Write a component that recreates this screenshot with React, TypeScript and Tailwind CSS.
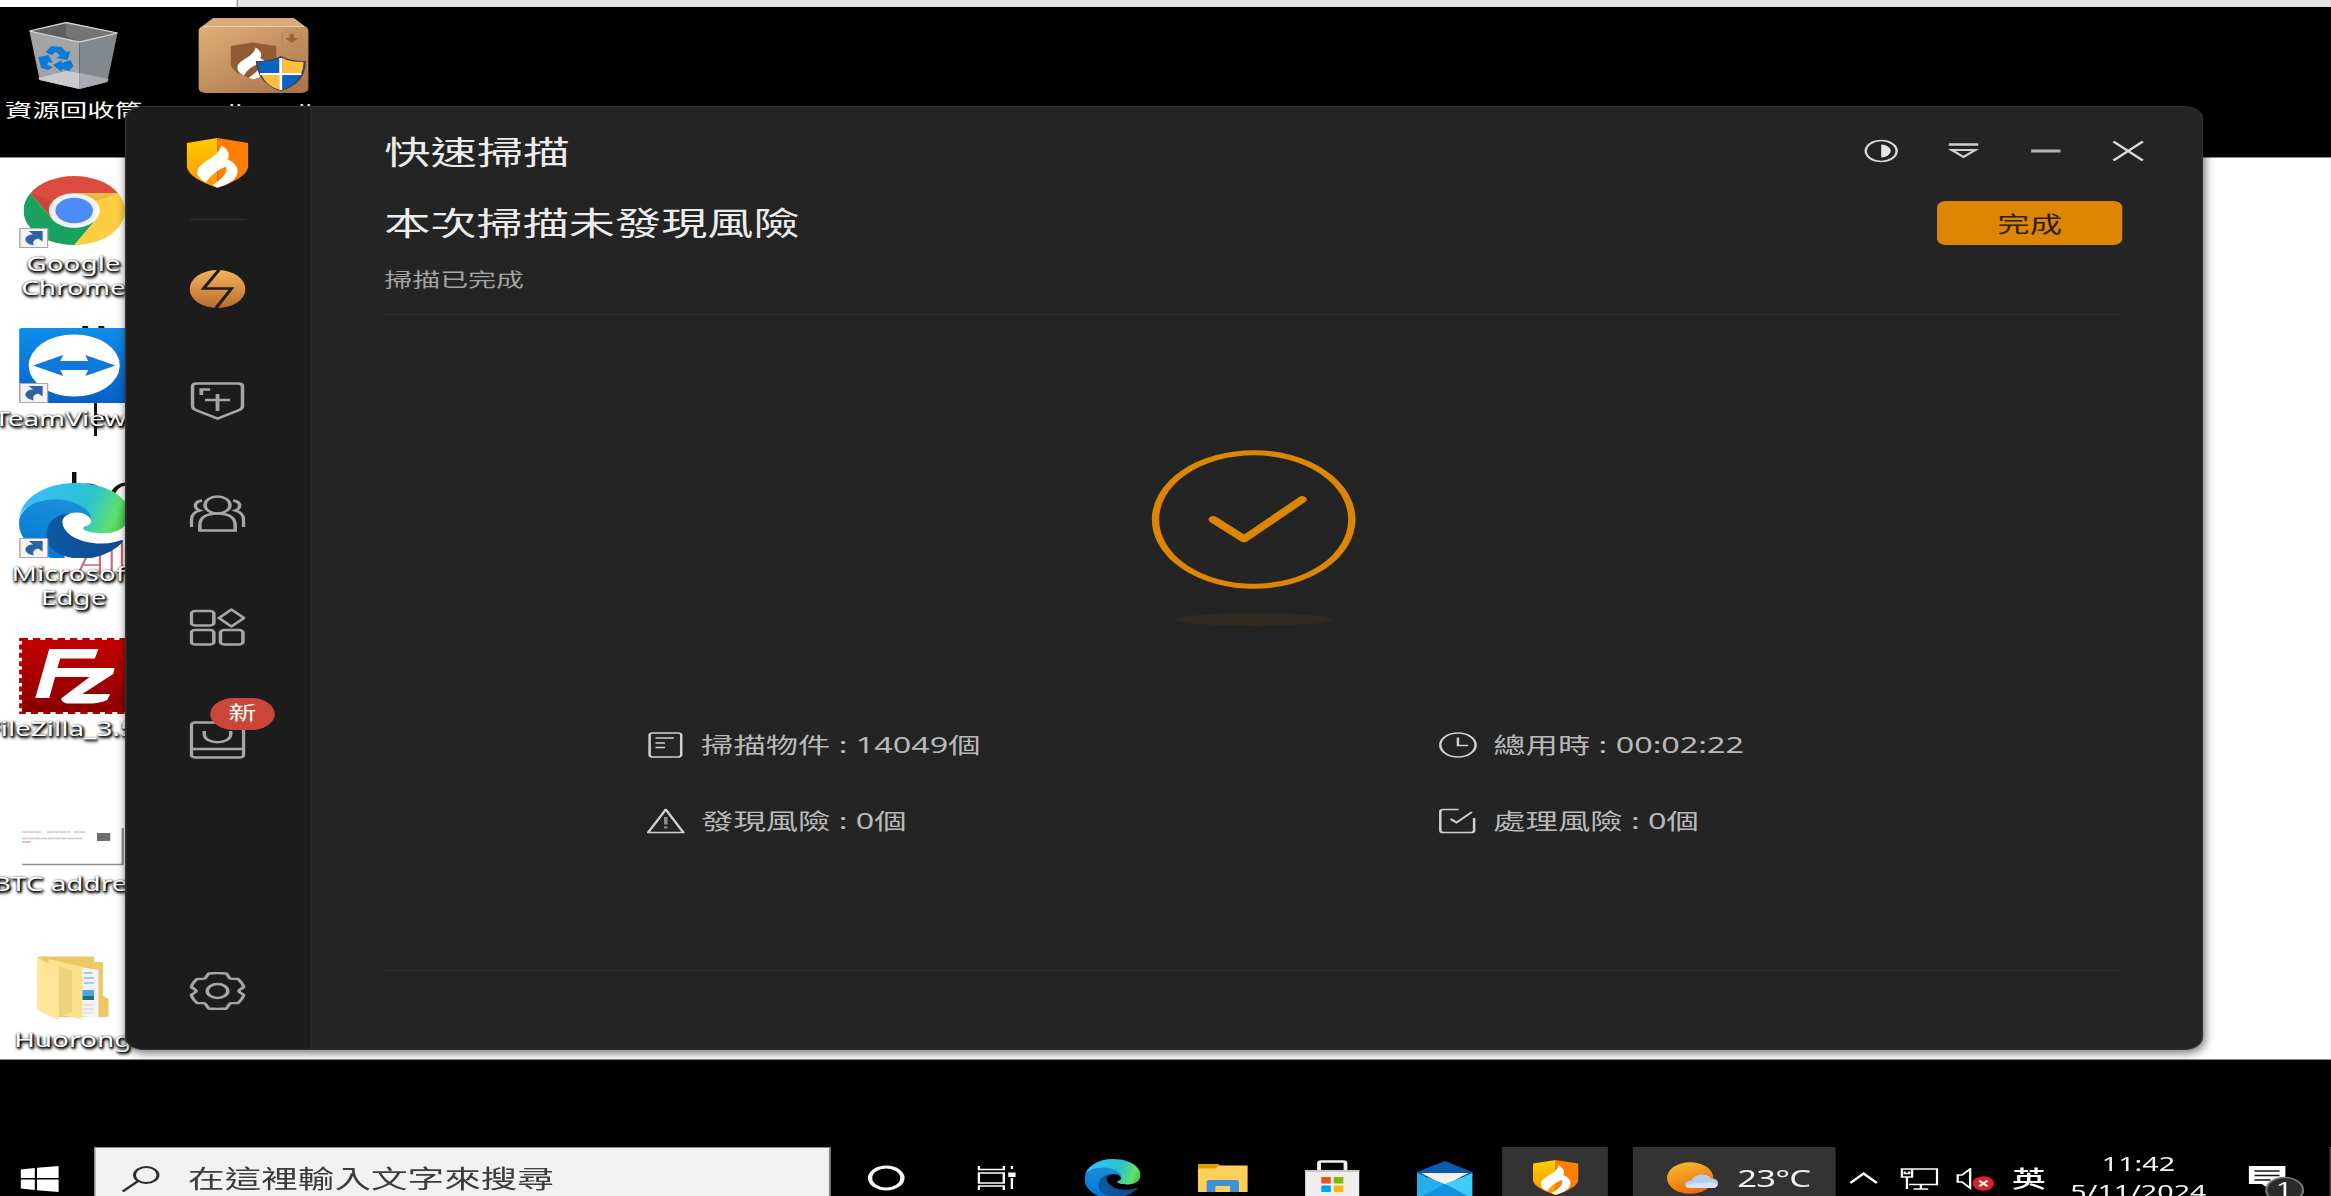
import React from 'react';

type Box = { className?: string };

const Flame = () => (
  <path
    fill="#fff"
    d="M24.300 7.500 C29 12 30.500 17 28.500 22 C33 24.500 35.500 29 35.500 34 C35.500 42 29 48 21.500 50.500 L18 48 C24 42 28.500 37 27.500 29 C24 31 17 36 13.500 45.500 C9 42 7 38 7.500 34 C8.500 24 22 21 24.300 7.500 Z"
  />
);

const Shield = ({ className }: Box) => (
  <svg viewBox="0 0 43 51" preserveAspectRatio="none" className={className}>
    <defs>
      <linearGradient id="sl" x1="0" y1="0" x2="0" y2="1">
        <stop offset="0" stopColor="#ffcc00" />
        <stop offset="1" stopColor="#ff9500" />
      </linearGradient>
    </defs>
    <path fill="url(#sl)" d="M21.500 0 L0 5 V29 C1 38 10 45 21.500 51 Z" />
    <path fill="#ff7d00" d="M21.500 0 L43 5 V29 C42 38 33 45 21.500 51 Z" />
    <Flame />
  </svg>
);

const Edge = ({ className }: Box) => (
  <svg viewBox="0 0 256 256" className={className}>
    <defs>
      <linearGradient id="e1" x1="0" y1="0" x2="1" y2="0">
        <stop offset="0" stopColor="#0c59a4" />
        <stop offset="1" stopColor="#114a8b" />
      </linearGradient>
      <linearGradient id="e2" x1="0.6" y1="0" x2="0.3" y2="1">
        <stop offset="0" stopColor="#1b90d8" />
        <stop offset="1" stopColor="#0078d8" />
      </linearGradient>
      <linearGradient id="e3" x1="0" y1="0.4" x2="1" y2="0.6">
        <stop offset="0" stopColor="#38bdff" />
        <stop offset="0.6" stopColor="#2bc3d0" />
        <stop offset="0.88" stopColor="#5fe070" />
        <stop offset="1" stopColor="#4cc845" />
      </linearGradient>
    </defs>
    <path fill="url(#e2)" d="M105.700 241.400a79.200 79.200 0 0 1-22.700-21.300a80.700 80.700 0 0 1 34.100-115.100c3.400-1.600 9-4.400 16.500-4.300c10.900.1 21 5.200 27.500 13.900c4.300 5.700 6.800 12.700 6.900 19.900c0-.2 25.400-83.300-84.600-83.300c-46.200 0-84.100 43.900-84.100 82.400c-.2 20.300 4.200 40.500 12.800 59c28.800 61.300 97.500 91.300 161.800 70.600c-22.900 7.200-47.800 4.300-68.200-8.100z" />
    <path fill="url(#e1)" d="M235.700 195.500a93.700 93.700 0 0 1-10.600 4.700a101.900 101.900 0 0 1-35.900 6.400c-47.300 0-88.500-32.500-88.500-74.300c.1-11.400 6.400-21.900 16.400-27.300c-42.800 1.800-53.800 46.400-53.800 72.500c0 73.900 68.100 81.400 82.800 81.400c7.900 0 19.800-2.300 27-4.600l1.300-.4a128.300 128.300 0 0 0 66.600-52.800a4 4 0 0 0-5.300-5.600z" />
    <path fill="url(#e3)" d="M152.300 148.900c-.9 1.100-3.500 2.600-3.500 5.900c0 2.700 1.800 5.300 4.900 7.500c14.900 10.400 43.100 9 43.200 9a61.800 61.800 0 0 0 31.400-8.700a63.800 63.800 0 0 0 28-54.900c.3-22.600-8-37.600-11.400-44.200C223.800 21.600 179.500 0 128.100 0A127.800 127.800 0 0 0 0 126.200c.5-38.500 38.700-69.500 84.100-69.500c3.700 0 24.600.4 44 10.600c17.100 9 26.100 19.800 32.300 30.600c6.500 11.200 7.600 25.300 7.600 30.900s-2.800 14-15.700 20.100z" />
  </svg>
);

const Chrome = ({ className }: Box) => {
  const arc = 'M6.700 25 A50 50 0 0 1 93.300 25 H50 A25 25 0 0 0 28.350 62.500 Z';
  return (
    <svg viewBox="0 0 100 100" className={className}>
      <path fill="#dd4b3e" d={arc} />
      <path fill="#ffcd42" d={arc} transform="rotate(120 50 50)" />
      <path fill="#18a15f" d={arc} transform="rotate(240 50 50)" />
      <path fill="#3e2723" opacity="0.12" d="M6.700 25 L28.350 62.500 L30 38 Z M50 25 H93.300 L72 36 Z" />
      <circle cx="50" cy="50" r="22.500" fill="#f1f1f1" />
      <circle cx="50" cy="50" r="18.500" fill="#4c8bf5" />
    </svg>
  );
};

const Recycle = ({ className }: Box) => (
  <svg viewBox="0 0 60 67" preserveAspectRatio="none" className={className}>
    <path fill="#5f5f5f" d="M0 9 L25 0 L60 11 L34 20 Z" />
    <path fill="#757575" d="M25 0 L60 11 L34 20 L25 14 Z" />
    <path fill="#a2a4a6" d="M0 9 L34 20 V67 L7 58 Z" />
    <path fill="#83888c" d="M34 20 L60 11 L53 60 L34 67 Z" />
    <path fill="#c9cbce" d="M6 56 L25 49 L34 51 V67 L7 58 Z" />
    <path fill="#a9adb1" d="M34 51 L54 57 L53 60 L34 67 Z" />
    <path fill="none" stroke="#d6d6d6" strokeWidth="1.300" d="M0 9 L25 0.600 L60 11 L34 20 Z" />
    <g fill="#0a7bd6">
      <path d="M11 30 L15 24 L22 25 L25 30 L28 29 L26 38 L18 36 L21 34 L18 30 L15 33 Z" />
      <path d="M6 35 L13 33 L16 41 L13 40 L12 43 L16 45 L13 48 L8 46 Z" />
      <path d="M16 43 L22 38 V41 L28 38 L30 44 L27 49 L22 47 V50 Z" />
    </g>
  </svg>
);

const Installer = ({ className }: Box) => (
  <svg viewBox="0 0 75 75" className={className}>
    <defs>
      <linearGradient id="bx" x1="0" y1="0" x2="0.8" y2="1">
        <stop offset="0" stopColor="#e0b078" />
        <stop offset="1" stopColor="#aa774d" />
      </linearGradient>
    </defs>
    <path fill="#d9ab78" d="M10 0 H65 L74 10 H1 Z" />
    <rect y="8" width="75" height="67" rx="5" fill="url(#bx)" />
    <path stroke="#eed0a8" strokeWidth="1" d="M3 8.500 H72" />
    <rect x="57" y="14" width="13" height="13" rx="1" fill="none" stroke="#b98a5c" />
    <path fill="#9c6238" d="M62 16 H65 V20 H68 L63.500 25 L59 20 H62 Z" />
    <path fill="#925c33" d="M22 28 L37 24.500 L53 28 V46 C52 53 46 57 37 61 C28 57 23 53 22 46 Z" />
    <g transform="translate(21 24) scale(.74)"><Flame /></g>
    <path fill="#39444d" d="M39 43 C46 43 52 41 56 38 C60 41 66 43 73 43 C73 58 68 68 56 73 C45 68 40 58 39 43 Z" />
    <path fill="#0a64c0" d="M40.500 44 C47 44 52 42 55 40 V55 H42 C41 51 40.500 48 40.500 44 Z M57 57 H69 C67 64 63 69 57 71.500 Z" />
    <path fill="#ffbe3c" d="M57 40 C61 43 66 44 71.500 44 C71.500 48 71 52 70 55 H57 Z M43 57 H55 V71.500 C49 69 45 64 43 57 Z" />
    <path stroke="#fff" strokeWidth="2" d="M56 40 V72 M42 56 H70" />
  </svg>
);

const TeamViewer = ({ className }: Box) => (
  <svg viewBox="0 0 75 75" className={className}>
    <defs>
      <linearGradient id="tv" x1="0" y1="0" x2="0" y2="1">
        <stop offset="0" stopColor="#0f8eec" />
        <stop offset="1" stopColor="#0860c8" />
      </linearGradient>
    </defs>
    <rect width="75" height="75" rx="2" fill="url(#tv)" />
    <circle cx="37.500" cy="37.500" r="31" fill="#fff" />
    <path fill="#0f78dc" d="M9.500 37.500 L30 27 L28 33 H47 L45 27 L65.500 37.500 L45 48 L47 42 H28 L30 48 Z" />
  </svg>
);

const FileZilla = ({ className }: Box) => (
  <svg viewBox="0 0 75 76" className={className}>
    <defs>
      <linearGradient id="fz" x1="0" y1="0" x2="0" y2="1">
        <stop offset="0" stopColor="#c40000" />
        <stop offset="1" stopColor="#8a0000" />
      </linearGradient>
    </defs>
    <rect x="2" y="2" width="73" height="72" fill="url(#fz)" />
    <rect x="1" y="1" width="74" height="74" fill="none" stroke="#b00000" strokeWidth="2.500" strokeDasharray="5 3.400" />
    <path fill="#fff" d="M20.500 11 H54 L51.500 20.500 H28 L26 30 H65 L64 36 L43 56 H62 L60 62 C55 65 50 66 44 65.500 H33 C30 65 28 62 29 60 L48 39 H24.500 L20.500 60 H11 Z" />
  </svg>
);

const Folder = ({ className }: Box) => (
  <svg viewBox="0 0 49 64" preserveAspectRatio="none" className={className}>
    <path fill="#ecc765" d="M1 0.500 H39 V6 H45 V40 L49 43 V61 H14 L1 20 Z" />
    <path fill="#f3f3f3" d="M29 11 L42 14 V62 L29 60 Z" />
    <path stroke="#9ccbf0" strokeWidth="2" d="M32 17 H38 M32 22 H39 M32 27 H39" />
    <path fill="#4aa5ea" d="M31 34 H39 V40 H31 Z" />
    <path fill="#216f7a" d="M31 40 H39 V44 H31 Z" />
    <path stroke="#d3d3d3" strokeWidth="1" d="M31 49 H39 M31 53 H39 M31 57 H38" />
    <path fill="#fbe08d" d="M8 3 L31 11 V63 L8 57 Z" />
    <path fill="#ecd37c" d="M15 10 L24 15 V56 L15 60 Z" />
    <path fill="#fee59a" d="M0 1 L15 13 V64 L0 54 Z" />
  </svg>
);

const Shortcut = () => (
  <svg viewBox="0 0 20 20" className="absolute left-[13px] bottom-0 h-5 w-5">
    <rect x="0.500" y="0.500" width="19" height="19" fill="#f4f4f4" stroke="#a9a9a9" />
    <path fill="#2f62a5" d="M6.500 3 H16 V13.500 L13 10.500 C10 11.500 9 14 10 17.500 C5 16 3 12 5 9 C6 7 8 6.500 9.500 6.500 Z" />
  </svg>
);

const label =
  'whitespace-nowrap text-center text-[19px] leading-[23.500px] text-white [text-shadow:1px_1px_2px_#000,0_1px_2px_#000,1px_2px_3px_#000]';

const line = {
  fill: 'none',
  stroke: '#a6a6a6',
  strokeWidth: 2.4,
} as const;

const navIcons: React.ReactNode[] = [
  <svg key="shield" viewBox="0 0 38 38" className="h-[38px] w-[38px]" {...line}>
    <path d="M5 1.500 H33 Q36 1.500 36 4.500 V24 Q36 27 33 28.500 L19 36.500 L5 28.500 Q2 27 2 24 V4.500 Q2 1.500 5 1.500 Z" />
    <path d="M8 13 V7.500 H14 M19 12 V29 M10.500 18 H27.500" strokeWidth="2.600" />
  </svg>,
  <svg key="people" viewBox="0 0 38 38" className="h-[38px] w-[38px]" {...line}>
    <circle cx="19" cy="10" r="8.500" />
    <path d="M7 35.500 V30 C7 22 12 18.500 19 18.500 S31 22 31 30 V35.500 Z M8.500 5.500 C3 6.500 2.500 13 7 15.500 C3 17 1.200 20 1.200 25 V32 M29.500 5.500 C35 6.500 35.500 13 31 15.500 C35 17 36.800 20 36.800 25 V32" />
  </svg>,
  <svg key="grid" viewBox="0 0 38 38" className="h-[38px] w-[38px]" {...line}>
    <rect x="1.200" y="3" width="15.300" height="14.500" rx="2.500" />
    <rect x="1.200" y="22" width="15.300" height="14.500" rx="2.500" />
    <rect x="21" y="22" width="15.300" height="14.500" rx="2.500" />
    <path d="M28.500 1.500 L37 10 L28.500 18.500 L20 10 Z" strokeLinejoin="round" />
  </svg>,
];

const Inbox = () => (
  <svg viewBox="0 0 38 38" className="h-[38px] w-[38px]" {...line}>
    <rect x="1.200" y="1.500" width="35.600" height="35" rx="2.500" />
    <path d="M1 28 H37 M10 10 V13 C10 24 28 24 28 13 V10" />
  </svg>
);

const Gear = () => (
  <svg viewBox="0 0 38 38" className="h-[38px] w-[38px]" {...line}>
    <circle cx="19" cy="19" r="7" />
    <path
      strokeLinejoin="round"
      d="M13 1.500 Q19 0.500 25 1.500 L27.500 6.500 Q28 7 33 7 Q36 11 37 15 Q33.500 18 33.500 19 Q33.500 20 37 23 Q36 27 33 31 Q28 31 27.500 31.500 L25 36.500 Q19 37.500 13 36.500 L10.500 31.500 Q10 31 5 31 Q2 27 1 23 Q4.500 20 4.500 19 Q4.500 18 1 15 Q2 11 5 7 Q10 7 10.500 6.500 Z"
    />
  </svg>
);

const stats = [
  {
    text: '掃描物件 : 14049個',
    icon: (
      <>
        <rect x="2" y="1" width="21.500" height="24" rx="2" />
        <path d="M6 6 H18.500 M6 11 H12.500 M6 15.500 H12.500" />
      </>
    ),
  },
  {
    text: '總用時 : 00:02:22',
    icon: (
      <>
        <circle cx="13" cy="13" r="12" />
        <path d="M13 5.500 V13.500 H20" />
      </>
    ),
  },
  {
    text: '發現風險 : 0個',
    icon: (
      <>
        <path d="M13 1.500 L25 24.500 H1 Z" strokeLinejoin="round" />
        <path d="M13 9 V16.500 M13 18.500 V20.500" stroke="#8c8c8c" strokeWidth="2.400" />
      </>
    ),
  },
  {
    text: '處理風險 : 0個',
    icon: (
      <>
        <path d="M13.500 1.500 H3 Q1 1.500 1 3.500 V22.500 Q1 24.500 3 24.500 H22 Q24 24.500 24 22.500 V10" />
        <path d="M8 11 L12 14.500 L22.500 4" />
      </>
    ),
  },
];

const DesktopIcons = () => (
  <div className="absolute left-0 top-0 h-full w-[100px]">
    <div className="absolute top-[22px] flex w-[100px] flex-col items-center">
      <Recycle className="h-[67px] w-[60px]" />
      <span className="mt-[9px] whitespace-nowrap text-[18.700px] leading-[24px] text-white">資源回收筒</span>
    </div>
    <div className="absolute left-[122px] top-[18px] flex w-[100px] flex-col items-center">
      <Installer className="h-[75px] w-[75px]" />
      <span className="mt-[6px] -ml-[10px] text-[18.500px] leading-[24px] text-white">sysdiag-all</span>
    </div>
    <div className="absolute top-[173px] w-[100px]">
      <div className="relative flex h-[75px] justify-center">
        <Chrome className="mt-[3px] h-[69px] w-[69px]" />
        <Shortcut />
      </div>
      <p className={label + ' mt-[5px]'}>Google<br />Chrome</p>
    </div>
    <div className="absolute top-[328px] w-[100px]">
      <div className="relative flex h-[75px] justify-center">
        <TeamViewer className="h-[75px] w-[75px]" />
        <Shortcut />
      </div>
      <p className={label + ' mt-[5px] -ml-[4px] w-[108px]'}>TeamViewer</p>
    </div>
    <div className="absolute top-[483px] w-[100px]">
      <div className="relative flex h-[75px] justify-center">
        <Edge className="h-[75px] w-[75px]" />
        <Shortcut />
      </div>
      <p className={label + ' mt-[5px]'}>Microsoft<br />Edge</p>
    </div>
    <div className="absolute top-[638px] w-[100px]">
      <div className="flex h-[76px] justify-center">
        <FileZilla className="h-[76px] w-[75px]" />
      </div>
      <p className={label + ' mt-[4px] -ml-[10px] w-[114px]'}>FileZilla_3.59</p>
    </div>
    <div className="absolute top-[826px] w-[100px]">
      <svg viewBox="0 0 72 40" className="ml-[14px] h-10 w-[72px]">
        <rect x="0" y="0" width="70.500" height="38.500" fill="#fff" />
        <path d="M1 38.500 H69.500 V2" fill="none" stroke="#8e8e8e" strokeWidth="1.500" />
        <path d="M1 6 H14 M18 6 H34 M36 6 H44 M1 12.500 H42" stroke="#c8c8c8" strokeWidth="1.500" strokeDasharray="4 .4" />
        <path d="M1 16 H7" stroke="#f4a0a0" strokeWidth="1.500" />
        <rect x="52" y="7" width="9" height="8" fill="#6e6e6e" />
      </svg>
      <p className={label + ' mt-[7px] -ml-[5px] w-[108px]'}>BTC address</p>
    </div>
    <div className="absolute top-[956px] w-[100px]">
      <Folder className="ml-[25px] h-[64px] w-[49px]" />
      <p className={label + ' mt-[9px] -ml-[1px]'}>Huorong</p>
    </div>
  </div>
);

const AppWindow = () => (
  <div className="absolute left-[84.500px] top-[105.500px] flex h-[944.500px] w-[1414.500px] overflow-hidden rounded-[13px] border border-[#343434] bg-[#242424] shadow-[1px_3px_8px_rgba(0,0,0,0.55)]">
    <aside className="flex w-[126px] shrink-0 flex-col items-center border-r border-[#2e2e2e] bg-[#1c1c1c] pt-[31px] pb-[39px]">
      <Shield className="h-[50px] w-[42px]" />
      <div className="mt-[31px] h-px w-[38px] bg-[#333]" />
      <svg viewBox="0 0 38 38" className="mt-[50px] h-[38px] w-[38px] shrink-0">
        <defs>
          <linearGradient id="bolt" x1="0" y1="0" x2="0" y2="1">
            <stop offset="0" stopColor="#f3b45c" />
            <stop offset="1" stopColor="#b96c2e" />
          </linearGradient>
        </defs>
        <circle cx="19" cy="19" r="19" fill="url(#bolt)" />
        <path d="M20 0 L9.500 18.500 H28.500 L18 38" fill="none" stroke="#1c1c1c" strokeWidth="2.400" />
      </svg>
      <div className="mt-[74px] flex flex-col gap-[75px]">
        {navIcons}
        <div className="relative">
          <Inbox />
          <span className="absolute -top-[23px] left-[14px] flex h-8 w-[44px] items-center justify-center rounded-full bg-[#cb4638] pb-px text-[19px] text-white">新</span>
        </div>
      </div>
      <div className="mt-auto">
        <Gear />
      </div>
    </aside>
    <main className="flex flex-1 flex-col pl-[50px] pr-[54px]">
      <header className="-mr-[17px] flex h-[93px] items-center justify-between">
        <h1 className="-mt-[2px] text-[31.500px] leading-none text-[#ececec]">快速掃描</h1>
        <div className="-mt-[3px] flex gap-[30px]">
          <svg viewBox="0 0 26 26" className="h-[26px] w-[26px]">
            <circle cx="13" cy="12" r="10.500" fill="none" stroke="#d8d8d8" strokeWidth="1.700" />
            <path d="M13 5.500 A6.500 6.500 0 0 1 13 18.500 Z" fill="#e6e6e6" />
          </svg>
          <svg viewBox="0 0 26 26" className="h-[26px] w-[26px]" fill="none" stroke="#d0d0d0">
            <path d="M3 5.500 H23" strokeWidth="2.400" />
            <path d="M5 11 H21 L13 18 Z" strokeWidth="2" />
          </svg>
          <svg viewBox="0 0 26 26" className="h-[26px] w-[26px]">
            <path d="M3 12 H23" stroke="#b4b4b4" strokeWidth="3" />
          </svg>
          <svg viewBox="0 0 26 26" className="h-[26px] w-[26px]">
            <path d="M3 2.500 L23 21.500 M23 2.500 L3 21.500" stroke="#dcdcdc" strokeWidth="2" />
          </svg>
        </div>
      </header>
      <div className="flex h-[46px] items-center justify-between">
        <h2 className="text-[31.400px] leading-none text-[#ececec]">本次掃描未發現風險</h2>
        <button className="h-[44px] w-[126px] rounded-[6px] bg-[#dd8604] pt-px text-[22px] leading-none text-[#2b1d08]">完成</button>
      </div>
      <div className="flex h-[69.500px] items-center border-b border-[#323232] text-[19px] text-[#a3a3a3]">掃描已完成</div>
      <svg viewBox="0 0 140 180" className="mx-auto mt-[132.500px] h-[180px] w-[140px] shrink-0" fill="none" stroke="#dd8604">
        <circle cx="70" cy="71.500" r="66.800" strokeWidth="5" />
        <path d="M42.500 71.500 L63.500 91 L103 51.500" strokeWidth="6.500" strokeLinecap="round" strokeLinejoin="round" />
        <ellipse cx="70" cy="171.500" rx="53" ry="6.500" fill="#33291f" stroke="none" />
      </svg>
      <div className="ml-[178.500px] mt-[79px] grid grid-cols-[539px_1fr] text-[22px] text-[#b9b9b9]">
        {stats.map((s) => (
          <div key={s.text} className="flex h-[76px] items-center gap-[11px]">
            <svg viewBox="0 0 26 26" className="h-[26px] w-[26px]" fill="none" stroke="#d0d0d0" strokeWidth="1.700">
              {s.icon}
            </svg>
            <span>{s.text}</span>
          </div>
        ))}
      </div>
      <div className="mt-[111px] h-px bg-[#323232]" />
    </main>
  </div>
);

const Taskbar = () => (
  <footer className="absolute left-0 top-[1147px] flex h-[62px] w-full items-center text-white">
    <svg viewBox="0 0 26 26" className="ml-[14px] mt-[2px] h-[26px] w-[26px]" fill="#fff">
      <path d="M0 3.500 L9.700 2 V12 H0 Z M11.200 1.700 L26 0 V12 H11.200 Z M0 13.500 H9.700 V24 L0 22.500 Z M11.200 13.500 H26 V26 L11.200 24.200 Z" />
    </svg>
    <div className="ml-[24px] flex h-full w-[501px] items-center border border-[#8a8a8a] bg-[#f1f1f1]">
      <svg viewBox="0 0 26 26" className="ml-[18px] mt-[2px] h-[26px] w-[26px]" fill="none" stroke="#2d2d2d" strokeWidth="2">
        <circle cx="16.500" cy="9" r="8" />
        <path d="M11 15 L0.500 25.500" />
      </svg>
      <span className="ml-[19px] text-[24.900px] leading-none text-[#3c3c3c]">在這裡輸入文字來搜尋</span>
    </div>
    <svg viewBox="0 0 26 26" className="ml-[25px] h-[26px] w-[26px]">
      <circle cx="13" cy="13" r="11" fill="none" stroke="#f5f5f5" strokeWidth="3" />
    </svg>
    <svg viewBox="0 0 27 26" className="ml-[48.500px] h-[26px] w-[27px]" fill="none" stroke="#fff" strokeWidth="1.600">
      <path d="M1 1 V4.500 H18 V1 M1 8 H18 V18 H1 Z M1 25 V21 H18 V25 M23.500 1 V4 M23.500 13 V24" />
      <path d="M21 7.500 H26 V12 H21 Z" fill="#fff" stroke="none" />
    </svg>
    <Edge className="ml-[46px] h-[38px] w-[38px]" />
    <svg viewBox="0 0 34 28" className="ml-[39px] h-[28px] w-[34px]">
      <path fill="#e19d00" d="M0 0 H14 L15.500 2 V6 H0 Z" />
      <path fill="#ffd15c" d="M0 4.500 H12 L14.500 1.500 H34 V28 H0 Z" />
      <path fill="#3c91d8" d="M6 18 Q6 16 8 16 H26 Q28 16 28 18 V28 H22 V22 H12 V28 H6 Z" />
    </svg>
    <svg viewBox="0 0 37 42" className="ml-[39.500px] mt-[5px] h-[42px] w-[37px]">
      <path d="M9.500 12 V3 Q9.500 1.500 11 1.500 H26 Q27.500 1.500 27.500 3 V12" fill="none" stroke="#f2f2f2" strokeWidth="2.600" />
      <path fill="#eee" d="M0 10 H37 V42 H0 Z" />
      <path fill="#c9c9c9" d="M0 10 H37 V12 H0 Z" />
      <path fill="#f25022" d="M11 17 H17.500 V23.500 H11 Z" />
      <path fill="#7fba00" d="M19.500 17 H26 V23.500 H19.500 Z" />
      <path fill="#00a4ef" d="M11 25.500 H17.500 V32 H11 Z" />
      <path fill="#ffb900" d="M19.500 25.500 H26 V32 H19.500 Z" />
    </svg>
    <svg viewBox="0 0 38 38" className="ml-[39px] mt-[4px] h-[38px] w-[38px]">
      <path fill="#0a5ab0" d="M0 11 L19 0 L38 11 V15 H0 Z" />
      <path fill="#f2f2f2" d="M3 12 H35 L19 25 Z" />
      <path fill="#27aeea" d="M0 12 L19 23 L38 38 H0 Z" />
      <path fill="#3fcdf6" d="M38 12 L19 23 L38 38 Z" />
      <path fill="#1590dd" d="M0 38 L19 23 L38 38 Z" />
    </svg>
    <div className="ml-[20px] flex h-full w-[72px] justify-center bg-[#333]">
      <Shield className="mt-[13px] h-[35px] w-[31px]" />
    </div>
    <div className="ml-[17px] flex h-full w-[138px] items-center bg-[#333]">
      <svg viewBox="0 0 36 34" className="ml-[23px] h-[34px] w-[36px]">
        <defs>
          <linearGradient id="sun" x1="0.2" y1="0" x2="0.6" y2="1">
            <stop offset="0" stopColor="#f3bd2d" />
            <stop offset="1" stopColor="#f2660c" />
          </linearGradient>
        </defs>
        <circle cx="16" cy="17" r="15.800" fill="url(#sun)" />
        <path fill="#b4cdf4" d="M16 27 Q12.500 26.500 12.500 23 Q13 19.500 17 19.500 Q19 13 24.500 13.500 Q29 14 30 17.500 Q35 17.500 35 22.500 Q34.500 27 31 27 Z" />
        <path fill="#d7e5fb" d="M16 27 Q13 26.500 13 24.500 Q18 21.500 24 22.500 Q31 20 34.800 23.500 Q34 27 31 27 Z" />
      </svg>
      <span className="ml-[12px] pt-px text-[23.500px] tracking-[-0.5px] leading-none text-[#f2f2f2]">23°C</span>
    </div>
    <svg viewBox="0 0 20 12" className="ml-[9px] h-[12px] w-[20px]" fill="none" stroke="#fff" strokeWidth="1.900">
      <path d="M1 11 L10 1.500 L19 11" />
    </svg>
    <svg viewBox="0 0 26 22" className="ml-[15px] mt-[2px] h-[22px] w-[26px]" fill="none" stroke="#fff" strokeWidth="1.600">
      <path d="M8 1 H25 V16.500 H6 M1 1 H8 V9 H1 Z M4.500 9 V21 M9 21 H19 M14 16.500 V21 M3 3.500 V5.500 H6 V3.500" />
    </svg>
    <svg viewBox="0 0 26 24" className="ml-[12px] mt-[4px] h-[24px] w-[26px]" fill="none" stroke="#fff" strokeWidth="1.600">
      <path d="M1 7 H4 L9.500 1 V20 L4 14 H1 Z" />
      <circle cx="18.500" cy="15.500" r="7.300" fill="#dc1f2e" stroke="none" />
      <path d="M15.700 12.700 L21.300 18.300 M21.300 12.700 L15.700 18.300" strokeWidth="1.700" />
    </svg>
    <span className="ml-[12px] mt-px w-[23px] text-[23px] font-medium leading-none">英</span>
    <div className="ml-[14px] w-[98px] text-center text-[19.500px] leading-[28px] text-[#f4f4f4]">
      <div>11:42</div>
      <div>5/11/2024</div>
    </div>
    <div className="relative ml-[26px] mt-[2px] h-[26px] w-[40px]">
      <svg viewBox="0 0 40 40" className="absolute left-0 top-0 h-10 w-10">
        <path fill="#fff" d="M0 0 H25 V18 H14 V23 L9 18 H0 Z" />
        <path d="M4 5 H21 M4 9.500 H21 M4 14 H15" stroke="#111" strokeWidth="1.500" />
        <circle cx="24.500" cy="24" r="12.500" fill="#2b2b2b" stroke="#777" strokeWidth="1.500" />
      </svg>
      <span className="absolute left-[18.500px] top-[13px] text-[20px] leading-none">1</span>
    </div>
  </footer>
);

export default function App() {
  return (
    <div className="h-[1196px] w-[2331px] overflow-hidden bg-black">
      <div className="relative h-[1196px] w-[1586px] origin-top-left scale-x-[1.4697] overflow-hidden font-['Noto_Sans','Noto_Sans_CJK_TC',sans-serif]">
        <div className="flex h-[7px] bg-[#e4e5e6]">
          <div className="w-[162px] border-r border-[#9a9a9a] bg-white" />
        </div>
        <div className="h-[150px] bg-black" />
        <div className="relative h-[903px] overflow-hidden border-y border-[#8a8a8a] bg-white">
          <svg viewBox="0 0 90 500" className="absolute left-0 top-0 h-[500px] w-[90px]" fill="none" stroke="#111" strokeWidth="2">
            <path d="M56 169 H60 M67 169 H71 M65 240 V278 M65 257 L85 265" />
            <path d="M50.500 314 V340 M51 332 C58 324 66 326 70 336 M76 340 C77 330 82 326 86 326" strokeWidth="3" />
            <path d="M53 417 L60 395 H68 V417 M57 407 H68 M76 385 V417 M83 385 V417" stroke="#c76a7c" strokeWidth="1.500" />
          </svg>
        </div>
        <DesktopIcons />
        <AppWindow />
        <Taskbar />
        <div className="absolute right-0 top-[1147px] h-[49px] w-px bg-[#444]" />
      </div>
    </div>
  );
}
